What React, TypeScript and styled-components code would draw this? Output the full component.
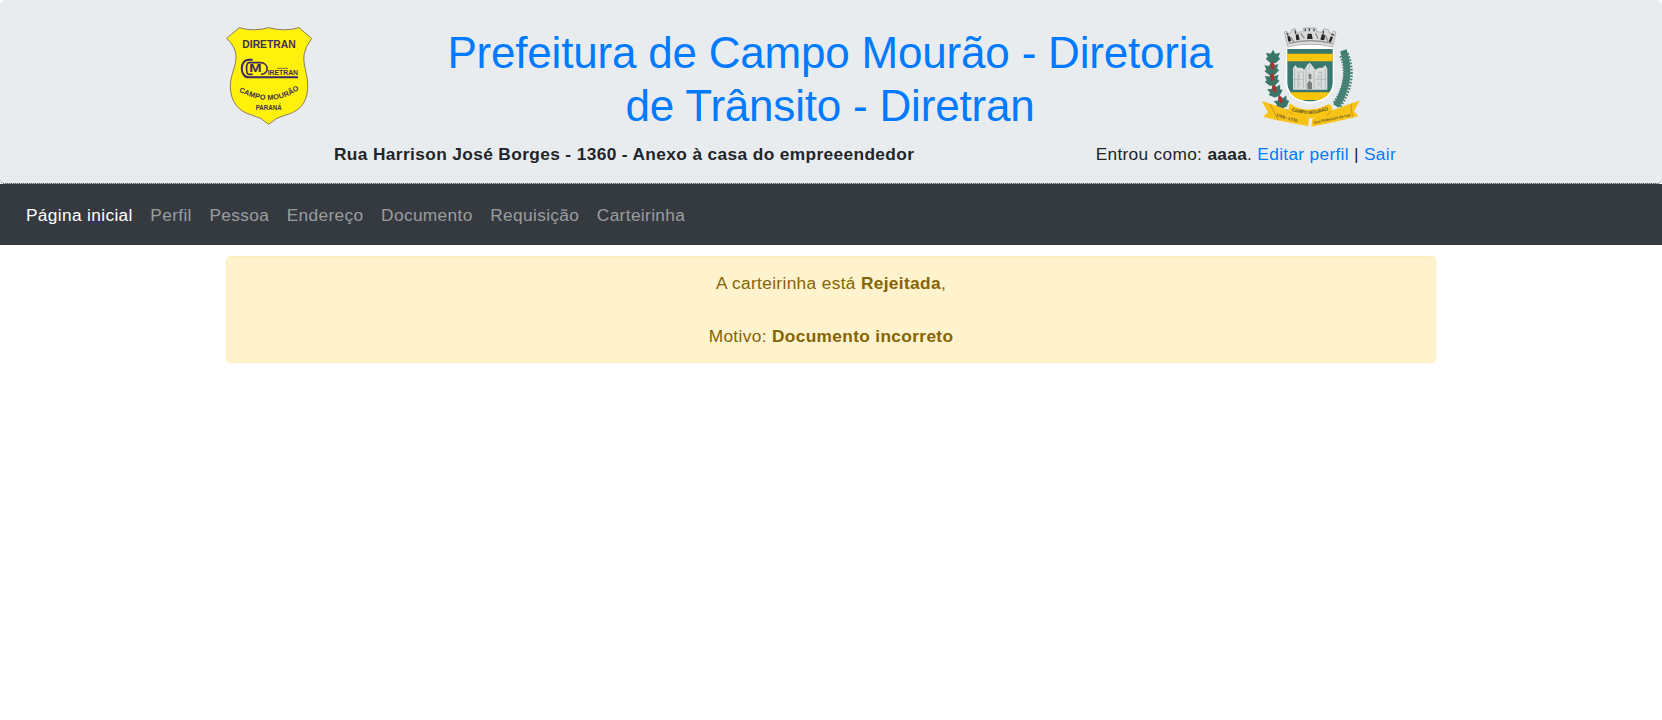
import React from 'react';
import styled, { createGlobalStyle } from 'styled-components';

const GlobalStyle = createGlobalStyle`
  *, *::before, *::after { box-sizing: border-box; }
  body {
    margin: 0;
    background: #fff;
    color: #212529;
    font-family: "Liberation Sans", Arial, sans-serif;
    font-size: 17.3px;
    line-height: 26.4px;
    letter-spacing: 0.35px;
  }
`;

const Header = styled.header`
  height: 184px;
  padding-top: 26px;
  background: #e9ecef;
  border-bottom: 1px dotted #212529;
  border-radius: 5.28px;
`;

const Container = styled.div`
  width: 1210px;
  margin: 0 auto;
`;

const Brand = styled.div`
  display: flex;
  justify-content: space-between;
  align-items: flex-start;
  height: 115.4px;
`;

const LogoSlot = styled.div<{ $width: number; $top?: number }>`
  flex: 0 0 ${(p) => p.$width}px;
  margin-top: ${(p) => p.$top ?? 0}px;
  svg { display: block; }
`;

const Title = styled.h1`
  flex: 0 0 800px;
  margin: 1px 0 0;
  font-size: 44px;
  font-weight: 400;
  line-height: 52.8px;
  letter-spacing: -0.2px;
  text-align: center;
`;

const Link = styled.a`
  color: #007bff;
  text-decoration: none;
`;

const InfoRow = styled.div`
  display: flex;
  justify-content: space-between;
  padding: 0 40px 0 108px;

  > strong { letter-spacing: 0.38px; }
  > span { letter-spacing: 0.32px; }
`;

const Navbar = styled.nav`
  display: flex;
  align-items: center;
  height: 61px;
  padding: 1.6px 17.2px 0;
  background: #343a40;
`;

const NavItem = styled.a<{ $active?: boolean }>`
  padding: 8.8px;
  color: ${(p) => (p.$active ? '#fff' : 'rgba(255, 255, 255, 0.5)')};
  text-decoration: none;
`;

const Alert = styled.div`
  margin-top: 10.6px;
  padding: 13.7px 22px 12.7px;
  border: 1px solid #ffeeba;
  border-radius: 4.4px;
  background: #fff3cd;
  color: #856404;
  text-align: center;
`;

const DiretranLogo = () => (
  <svg width="87" height="100" viewBox="30 30 261 300" aria-label="Diretran">
    <path
      d="M70 35 Q112 48 158 35 Q206 48 249 35 L287 67 Q267 94 264 117 C261 149 275 174 275 207 C276 263 247 287 209 297 Q178 305 158 325 Q138 305 107 297 C69 287 42 259 43 207 C44 174 61 153 60 118 Q58 91 32 67 Z"
      fill="#fff10a" stroke="#8d7a62" strokeWidth="3"
    />
    <g fill="#42304f" fontFamily="Liberation Sans" fontWeight="700" letterSpacing="0">
      <text x="79" y="96" fontSize="34" textLength="160" lengthAdjust="spacingAndGlyphs">DIRETRAN</text>
      <path d="M110 131 H99 C70 131 70 184 99 184 H246" fill="none" stroke="#3c256b" strokeWidth="6" />
      <path d="M110 175 H98 C90 175 89 140 99 140 H133 C160 140 160 175 135 175" fill="none" stroke="#3c256b" strokeWidth="5" />
      <text x="100" y="169" fontSize="33" textLength="37" lengthAdjust="spacingAndGlyphs" fill="#3c256b">M</text>
      <path d="M184 157 H216" stroke="#3c256b" strokeWidth="2" />
      <text x="155" y="178" fontSize="22" textLength="91" lengthAdjust="spacingAndGlyphs">IRETRAN</text>
      <path id="city-arc" d="M68 226 Q170 282 254 217" fill="none" />
      <text fontSize="22" letterSpacing="1.4">
        <textPath href="#city-arc" textLength="195">CAMPO MOURÃO</textPath>
      </text>
      <text x="119" y="281" fontSize="20" textLength="78" lengthAdjust="spacingAndGlyphs">PARANÁ</text>
    </g>
  </svg>
);

const LEAVES = [
  { x: 72, y: 122, r: 0 },
  { x: 68, y: 158, r: -5 },
  { x: 69, y: 190, r: -5 },
  { x: 78, y: 224, r: -20 },
  { x: 98, y: 258, r: -25 },
];

const BERRIES = [
  { x: 71, y: 149, r: 0 },
  { x: 70, y: 182, r: -5 },
  { x: 76, y: 217, r: -12 },
  { x: 94, y: 249, r: -20 },
];

const CityCrest = () => (
  <svg width="99" height="103" viewBox="36 27 297 309" aria-label="Campo Mourão">
    {/* crown */}
    <path d="M106 48 L113 45 L116 53 L126 50 L128 41 L139 38 L142 49 L162 47 L164 36 H201 L203 47 L220 49 L224 38 L238 41 L240 50 L249 53 L253 45 L261 49 L251 93 Q183 76 117 94Z" fill="#d9dadb" stroke="#999" strokeWidth="2" />
    <path d="M113 51 L118 59 M138 43 L140 54 M169 38 V46 M181 37 V46 M195 38 V46 M223 44 V53 M247 55 L255 57" stroke="#444" strokeWidth="4" />
    <path d="M118 77 L115 61 H123 L127 75Z M142 73 L140 56 L148 54 L152 71Z M174 69 L176 53 H188 L191 69Z M214 71 L219 54 L228 57 L226 73Z M239 77 L245 61 L252 63 L246 79Z" fill="#252525" />
    <path d="M126 64 L135 78 M155 52 L166 67 M200 52 L207 68 M229 58 L237 76 M119 82 Q183 66 250 82" fill="none" stroke="#8c8c8c" strokeWidth="4" />
    {/* shield */}
    <path d="M111 96 Q184 77 255 96 V197 C255 239 222 260 183 263 C143 260 110 238 110 197Z" fill="#fff" />
    <path d="M115 99 H251 V197 C251 235 219 254 183 256 C147 254 115 235 115 197Z" fill="#39766b" />
    <path d="M114 113 H251 V136 H114Z M123 229 H243 Q231 247 209 252 H157 Q133 246 123 229Z" fill="#f8c50b" />
    <path d="M132 221 V157 L139 147 L145 155 H158 L166 161 L176 145 L182 140 L188 146 L199 161 L210 155 H221 L229 147 L235 158 V221Z" fill="#dadddd" />
    <path d="M137 159 V218 M145 168 H157 M147 168 V216 M163 164 V218 M171 160 V217 M181 145 V161 M195 163 V218 M207 169 H219 M217 166 V217 M229 158 V218 M134 190 H161 M200 190 H232 M151 176 V187 M209 176 V187 M176 180 L182 170 L188 180 M152 199 V211 M209 199 V211" fill="none" stroke="#a2a9a8" strokeWidth="2" />
    <path d="M175 220 V202 L182 193 L189 202 V220Z M179 175 H187 V190 H179Z" fill="#747d7b" />
    {/* coffee branch */}
    {LEAVES.map((l) => (
      <path
        key={l.y}
        transform={`translate(${l.x} ${l.y}) rotate(${l.r})`}
        d="M0 -21 L7 -9 L21 -12 L16 1 L22 6 L8 19 H-8 L-22 6 L-16 1 L-21 -12 L-7 -9Z"
        fill="#397668"
      />
    ))}
    {BERRIES.map((b) => (
      <path
        key={b.y}
        transform={`translate(${b.x} ${b.y}) rotate(${b.r})`}
        d="M-1 -12 L6 -4 L3 12 H-4 L-6 -3Z"
        fill="#b02f2d"
      />
    ))}
    {/* wheat branch */}
    <path d="M283 103 Q313 190 261 270" fill="none" stroke="#3f7d70" strokeWidth="20" />
    <path d="M285 116 Q316 190 263 268" fill="none" stroke="#4b8578" strokeWidth="30" strokeDasharray="5 4" />
    {/* ribbons */}
    <path d="M38 255 L64 263 L112 280 L180 307 L178 331 Q137 323 84 313 L42 302 L57 289Z M332 254 L304 263 L244 285 L190 308 L187 332 L255 318 L310 305 L328 301 L315 285Z" fill="#f7c318" />
    <path d="M63 264 L88 313 M112 280 L131 295 M247 284 L234 299 M306 263 L310 304" stroke="#b87d17" strokeWidth="2" />
    <path d="M122 262 L134 269 Q185 294 237 265 L246 267 L251 281 Q222 303 185 307 Q146 300 117 285Z" fill="#f8c613" />
    <path id="crest-name" d="M127 284 Q185 305 242 280" fill="none" />
    <path id="crest-date" d="M80 301 L151 321" fill="none" />
    <path id="crest-motto" d="M195 324 L309 299" fill="none" />
    <g fill="#5e5429" fontFamily="Liberation Sans" fontWeight="700" letterSpacing="0">
      <text fontSize="14"><textPath href="#crest-name" textLength="114">CAMPO MOURÃO</textPath></text>
      <text fontSize="13"><textPath href="#crest-date" textLength="66">1769 - 1770</textPath></text>
      <text fontSize="11"><textPath href="#crest-motto" textLength="112">Dos Pinheirais do Ivaí</textPath></text>
    </g>
  </svg>
);

const NAV_ITEMS = ['Página inicial', 'Perfil', 'Pessoa', 'Endereço', 'Documento', 'Requisição', 'Carteirinha'];

export default function App() {
  return (
    <>
      <GlobalStyle />
      <Header>
        <Container>
          <Brand>
            <LogoSlot $width={173}><DiretranLogo /></LogoSlot>
            <Title><Link href="#">Prefeitura de Campo Mourão - Diretoria de Trânsito - Diretran</Link></Title>
            <LogoSlot $width={175} $top={-1}><CityCrest /></LogoSlot>
          </Brand>
          <InfoRow>
            <strong>Rua Harrison José Borges - 1360 - Anexo à casa do empreeendedor</strong>
            <span>
              Entrou como: <strong>aaaa</strong>. <Link href="#">Editar perfil</Link> | <Link href="#">Sair</Link>
            </span>
          </InfoRow>
        </Container>
      </Header>
      <Navbar>
        {NAV_ITEMS.map((label, i) => (
          <NavItem key={label} href="#" $active={i === 0}>{label}</NavItem>
        ))}
      </Navbar>
      <Container>
        <Alert role="alert">
          A carteirinha está <strong>Rejeitada</strong>,<br /><br />
          Motivo: <strong>Documento incorreto</strong>
        </Alert>
      </Container>
    </>
  );
}
